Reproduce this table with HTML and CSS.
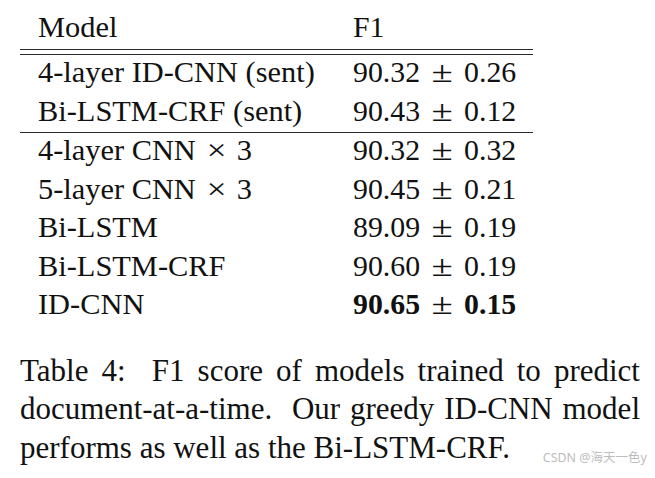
FILE: index.html
```html
<!DOCTYPE html>
<html lang="en">
<head>
<meta charset="utf-8">
<title>Table 4</title>
<link rel="stylesheet" href="styles.css">
</head>
<body>
<div class="page">
  <div class="table">
    <div class="row head"><span class="c1">Model</span><span class="c2">F1</span></div>
    <div class="double-rule"></div>
    <div class="row"><span class="c1">4-layer ID-CNN (sent)</span><span class="c2">90.32<span class="op"><span class="g">±</span></span>0.26</span></div>
    <div class="row"><span class="c1">Bi-LSTM-CRF (sent)</span><span class="c2">90.43<span class="op"><span class="g">±</span></span>0.12</span></div>
    <div class="rule"></div>
    <div class="row"><span class="c1">4-layer CNN<span class="op times"><span class="g">×</span></span>3</span><span class="c2">90.32<span class="op"><span class="g">±</span></span>0.32</span></div>
    <div class="row"><span class="c1">5-layer CNN<span class="op times"><span class="g">×</span></span>3</span><span class="c2">90.45<span class="op"><span class="g">±</span></span>0.21</span></div>
    <div class="row"><span class="c1">Bi-LSTM</span><span class="c2">89.09<span class="op"><span class="g">±</span></span>0.19</span></div>
    <div class="row"><span class="c1">Bi-LSTM-CRF</span><span class="c2">90.60<span class="op"><span class="g">±</span></span>0.19</span></div>
    <div class="row"><span class="c1">ID-CNN</span><span class="c2"><b>90.65</b><span class="op"><span class="g">±</span></span><b>0.15</b></span></div>
  </div>
  <p class="caption">Table 4:&nbsp; F1 score of models trained to predict document-at-a-time.&nbsp; Our greedy ID-CNN model performs as well as the Bi-LSTM-CRF.</p>
  <div class="watermark">CSDN @海天一色y</div>
</div>
</body>
</html>
```

FILE: styles.css
```css
html, body {
  margin: 0;
  padding: 0;
  background: #ffffff;
}

.page {
  position: relative;
  width: 655px;
  height: 478px;
  overflow: hidden;
  padding: 8px 0 0 20px;
  box-sizing: border-box;
  font-family: "Liberation Serif", "Times New Roman", serif;
  font-size: 30.4px;
  color: #111111;
}

.table {
  width: 513px;
}

.row {
  display: grid;
  grid-template-columns: 315px 1fr;
  height: 38.5px;
  line-height: 34.5px;
  white-space: nowrap;
}

.row.head {
  line-height: 38.5px;
}

.c1 {
  padding-left: 18px;
}

.c2 {
  padding-left: 18px;
  font-size: 29.8px;
}

.c2 b {
  font-weight: bold;
}

.op {
  display: inline-block;
  width: 44px;
  text-align: center;
}

.op.times {
  width: 41px;
}

.op .g {
  display: inline-block;
  transform: scaleX(1.3);
}

.op.times .g {
  transform: scaleX(1.15);
}

.double-rule {
  margin-top: 2px;
  height: 4.5px;
  border-top: 1.4px solid #2a2a2a;
  border-bottom: 1.4px solid #2a2a2a;
}

.rule {
  height: 0;
  border-top: 1.4px solid #2a2a2a;
}

.caption {
  width: 620px;
  margin: 26px 0 0 0;
  font-size: 31px;
  line-height: 38.5px;
  text-align: justify;
}

.watermark {
  position: absolute;
  right: 8px;
  bottom: 13px;
  font-family: "Noto Sans", "Noto Sans CJK SC", sans-serif;
  font-size: 12.5px;
  line-height: 14px;
  color: #bdbdbd;
}
```
